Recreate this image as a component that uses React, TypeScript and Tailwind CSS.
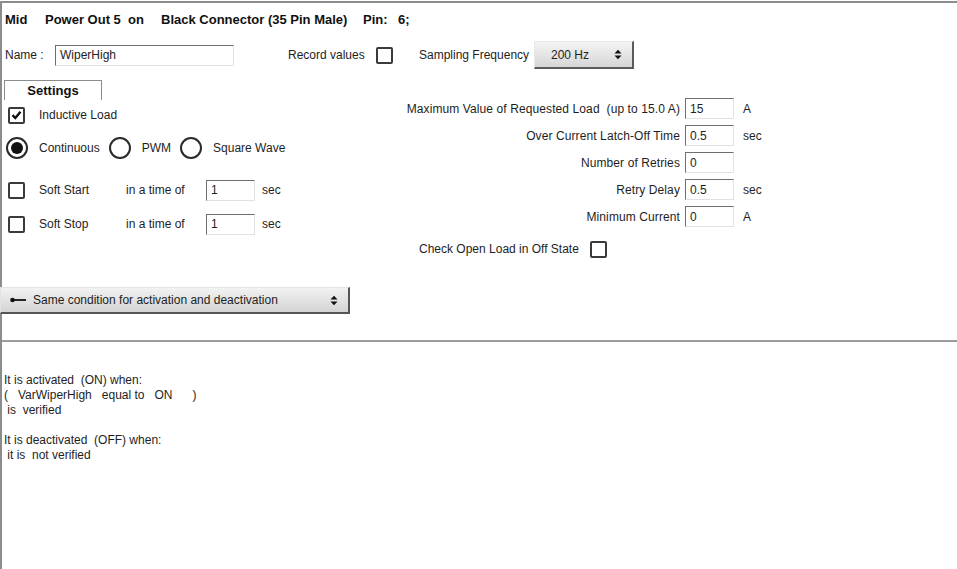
import React from 'react';

function Checkbox({ checked = false }: { checked?: boolean }) {
  return (
    <div className="w-[17px] h-[17px] shrink-0 rounded-[2px] border-2 border-[#3a3a3a] bg-white flex items-center justify-center">
      {checked && (
        <svg width="11" height="10" viewBox="0 0 11 10">
          <path d="M1.5 5.2 L4.3 8 L9.5 1.8" fill="none" stroke="#111" strokeWidth="2.4" />
        </svg>
      )}
    </div>
  );
}

function Radio({ checked = false }: { checked?: boolean }) {
  return (
    <div className="w-[22px] h-[22px] shrink-0 rounded-full border-2 border-[#2a2a2a] bg-white flex items-center justify-center">
      {checked && <div className="w-[12px] h-[12px] rounded-full bg-[#111]" />}
    </div>
  );
}

function Field({ value, width }: { value: string; width: string }) {
  return (
    <div
      className={`${width} h-[21px] shrink-0 bg-white border-t-[1.5px] border-l-[1.5px] border-r border-b border-t-[#6e6e6e] border-l-[#6e6e6e] border-r-[#e2e2e2] border-b-[#e2e2e2] pl-[4px] flex items-center`}
    >
      {value}
    </div>
  );
}

function UpDown() {
  return (
    <svg width="8" height="11" viewBox="0 0 8 11">
      <path d="M0.5 4.5 L4 0.8 L7.5 4.5 Z" fill="#111" />
      <path d="M0.5 6.5 L4 10.2 L7.5 6.5 Z" fill="#111" />
    </svg>
  );
}

function ParamRow({ label, value, unit }: { label: string; value: string; unit?: string }) {
  return (
    <div className="h-[27px] flex items-center">
      <span className="w-[288px] text-right whitespace-pre tracking-[0.1px]">{label}</span>
      <div className="ml-[5px]">
        <Field value={value} width="w-[49px]" />
      </div>
      {unit && <span className="ml-[9px]">{unit}</span>}
    </div>
  );
}

export default function App() {
  return (
    <div className="w-[957px] h-[569px] overflow-hidden bg-white font-['Liberation_Sans',Arial,sans-serif] text-[12px] text-[#1e1e1e]">
      <div className="h-full mt-[1px] border-t-2 border-l-2 border-[#8c8c8c] flex flex-col">
        {/* title */}
        <div className="h-[34px] pl-[3px] flex items-center font-bold text-[13px] text-[#111] whitespace-nowrap">
          <span className="w-[40px]">Mid</span>
          <span className="w-[83px]">Power Out 5</span>
          <span className="w-[33px]">on</span>
          <span className="w-[202px]">Black Connector (35 Pin Male)</span>
          <span className="w-[35px]">Pin:</span>
          <span>6;</span>
        </div>

        {/* name row */}
        <div className="h-[36px] pl-[3px] flex items-center">
          <span className="w-[50px]">Name :</span>
          <Field value="WiperHigh" width="w-[179px]" />
          <span className="ml-[54px] w-[88px]">Record values</span>
          <Checkbox />
          <span className="ml-[26px] w-[115px] whitespace-nowrap">Sampling Frequency</span>
          <div className="w-[100px] h-[28px] flex items-center justify-between pl-[16px] pr-[10px] bg-gradient-to-b from-[#f4f4f4] to-[#d6d6d6] border border-t-[#e8e8e8] border-l-[#e8e8e8] border-r-2 border-b-2 border-r-[#5a5a5a] border-b-[#5a5a5a]">
            <span>200 Hz</span>
            <UpDown />
          </div>
        </div>

        {/* settings */}
        <div className="flex items-start h-[190px]">
          <div className="w-[390px]">
            <div className="ml-[2px] mt-[7px] w-[98px] h-[20px] border-t border-l border-r border-[#8c8c8c] flex items-center justify-center font-bold text-[13px] text-[#111]">
              Settings
            </div>
            <div className="mt-[2px] h-[26px] flex items-center pl-[6px]">
              <Checkbox checked />
              <span className="ml-[14px]">Inductive Load</span>
            </div>
            <div className="mt-[7px] h-[26px] flex items-center pl-[4px]">
              <Radio checked />
              <span className="ml-[11px]">Continuous</span>
              <div className="ml-[9px]">
                <Radio />
              </div>
              <span className="ml-[11px]">PWM</span>
              <div className="ml-[9px]">
                <Radio />
              </div>
              <span className="ml-[11px]">Square Wave</span>
            </div>
            <div className="mt-[16px] h-[26px] flex items-center pl-[6px]">
              <Checkbox />
              <span className="ml-[14px] w-[87px]">Soft Start</span>
              <span className="w-[80px]">in a time of</span>
              <Field value="1" width="w-[49px]" />
              <span className="ml-[7px]">sec</span>
            </div>
            <div className="mt-[8px] h-[26px] flex items-center pl-[6px]">
              <Checkbox />
              <span className="ml-[14px] w-[87px]">Soft Stop</span>
              <span className="w-[80px]">in a time of</span>
              <Field value="1" width="w-[49px]" />
              <span className="ml-[7px]">sec</span>
            </div>
          </div>

          <div className="pt-[22px]">
            <ParamRow label="Maximum Value of Requested Load  (up to 15.0 A)" value="15" unit="A" />
            <ParamRow label="Over Current Latch-Off Time" value="0.5" unit="sec" />
            <ParamRow label="Number of Retries" value="0" />
            <ParamRow label="Retry Delay" value="0.5" unit="sec" />
            <ParamRow label="Minimum Current" value="0" unit="A" />
            <div className="mt-[6px] h-[26px] flex items-center pl-[27px]">
              <span>Check Open Load in Off State</span>
              <div className="ml-[11px]">
                <Checkbox />
              </div>
            </div>
          </div>
        </div>

        {/* condition dropdown */}
        <div className="mt-[24px] -ml-[2px] w-[350px] h-[27px] flex items-center justify-between pl-[9px] pr-[10px] bg-gradient-to-b from-[#f2f2f2] to-[#d4d4d4] border border-t-[#e4e4e4] border-l-[#e4e4e4] border-r-2 border-b-2 border-r-[#555] border-b-[#555]">
          <div className="flex items-center">
            <svg width="16" height="6" viewBox="0 0 16 6">
              <circle cx="2.5" cy="3" r="2.3" fill="#111" />
              <rect x="2.5" y="2.1" width="13.5" height="1.8" fill="#111" />
            </svg>
            <span className="ml-[7px]">Same condition for activation and deactivation</span>
          </div>
          <UpDown />
        </div>

        <div className="mt-[26px] h-[2px] bg-[#9c9c9c]" />

        <div className="pt-[31px] pl-[2px] leading-[15px] whitespace-pre">
          <div>It is activated  (ON) when:</div>
          <div>(   VarWiperHigh   equal to   ON      )</div>
          <div> is  verified</div>
          <div>&nbsp;</div>
          <div>It is deactivated  (OFF) when:</div>
          <div> it is  not verified</div>
        </div>
      </div>
    </div>
  );
}
